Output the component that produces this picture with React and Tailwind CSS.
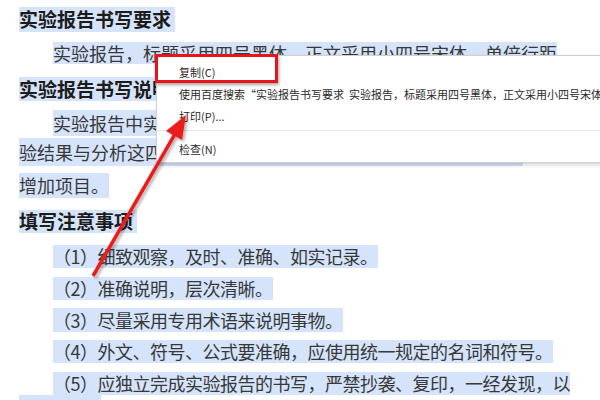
const sel = 'bg-[#d5e4fb]'

function Line({ gap, h, indent, bold, tight, children }) {
  return (
    <div className={`flex ${gap} ${h} ${indent ? 'pl-[53px]' : 'pl-[19px]'}`}>
      <span
        className={`${sel} flex items-center whitespace-nowrap ${tight ? 'tracking-[-0.5px]' : ''} ${
          bold ? 'text-[19px] font-bold text-[#1c1c1c]' : 'text-[18px] text-[#383838]'
        }`}
      >
        {children}
      </span>
    </div>
  )
}

function MenuItem({ children }) {
  return <div className="h-[22px] flex items-center pl-[22px] text-[11px] text-[#2a2a2a] whitespace-nowrap">{children}</div>
}

export default function App() {
  return (
    <div
      className="relative w-[600px] h-[400px] overflow-hidden bg-white"
      style={{ fontFamily: '"Noto Sans CJK SC", "Noto Sans", sans-serif' }}
    >
      <div className="flex flex-col">
        <Line gap="mt-[7px]" h="h-[25px]" bold>实验报告书写要求&nbsp;</Line>
        <Line gap="mt-[10px]" h="h-[22px]" indent>实验报告，标题采用四号黑体，正文采用小四号宋体，单倍行距</Line>
        <Line gap="mt-[13px]" h="h-[24px]" bold>实验报告书写说明&nbsp;</Line>
        <Line gap="mt-[9px]" h="h-[26px]" indent>实验报告中实验目的、实验原理、实验步骤、实验数据和实</Line>
        <Line gap="mt-[2px]" h="h-[28px]">验结果与分析这四项内容为必需项，教师可根据实验的具体要求</Line>
        <Line gap="mt-[7px]" h="h-[25px]">增加项目。</Line>
        <Line gap="mt-[12px]" h="h-[23px]" bold>填写注意事项&nbsp;</Line>
        <Line gap="mt-[12px]" h="h-[23px]" indent tight>（1）细致观察，及时、准确、如实记录。</Line>
        <Line gap="mt-[9px]" h="h-[23px]" indent tight>（2）准确说明，层次清晰。</Line>
        <Line gap="mt-[8px]" h="h-[24px]" indent tight>（3）尽量采用专用术语来说明事物。</Line>
        <Line gap="mt-[8px]" h="h-[23px]" indent tight>（4）外文、符号、公式要准确，应使用统一规定的名词和符号。</Line>
        <Line gap="mt-[9px]" h="h-[23px]" indent tight>（5）应独立完成实验报告的书写，严禁抄袭、复印，一经发现，以</Line>
        <div className="pl-[19px]">
          <div className={`${sel} w-[82px] h-[20px]`} />
        </div>
      </div>

      {/* context menu */}
      <div className="absolute left-[156px] top-[55px] w-[470px] bg-white border border-[#d0d0d0] shadow-[2px_2px_4px_rgba(0,0,0,0.18)] pt-[5px] pb-[2px]">
        <MenuItem>复制(C)</MenuItem>
        <MenuItem>使用百度搜索“实验报告书写要求&nbsp;&nbsp;实验报告，标题采用四号黑体，正文采用小四号宋体</MenuItem>
        <MenuItem>打印(P)...</MenuItem>
        <div className="mt-[3px] mb-[7px] h-px bg-[#e8e8e8]" />
        <MenuItem>检查(N)</MenuItem>
      </div>

      {/* highlight box */}
      <div className="absolute left-[155px] top-[54px] w-[123px] h-[29px] border-[3px] border-[#e8141b] shadow-[1px_2px_3px_rgba(0,0,0,0.35)]" />

      {/* arrow */}
      <svg className="absolute left-0 top-0" width="600" height="400" viewBox="0 0 600 400">
        <defs>
          <filter id="sh" x="-20%" y="-20%" width="140%" height="140%">
            <feDropShadow dx="2" dy="2" stdDeviation="1.5" floodColor="#000" floodOpacity="0.3" />
          </filter>
        </defs>
        <g filter="url(#sh)">
          <line x1="93" y1="276" x2="175" y2="134" stroke="#ec1c1c" strokeWidth="3.5" />
          <polygon points="186,115 182,140 166,131" fill="#ec1c1c" />
        </g>
      </svg>
    </div>
  )
}
